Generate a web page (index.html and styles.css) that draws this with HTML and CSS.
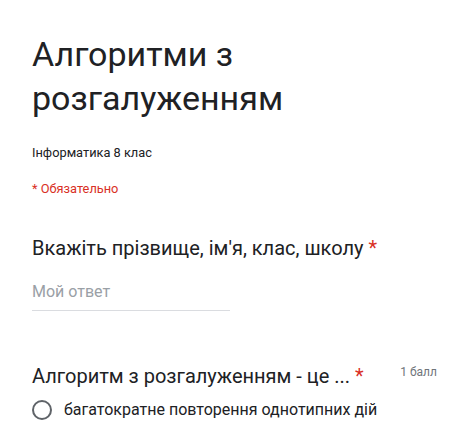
FILE: index.html
```html
<!DOCTYPE html>
<html lang="uk">
<head>
<meta charset="utf-8">
<link rel="stylesheet" href="styles.css">
</head>
<body>
<main class="form">
  <header class="form-header">
    <h1 class="form-title">Алгоритми з розгалуженням</h1>
    <p class="form-desc">Інформатика 8 клас</p>
    <p class="form-required">* Обязательно</p>
  </header>
  <section class="question">
    <div class="q-head">
      <h2 class="q-title">Вкажіть прізвище, ім'я, клас, школу <span class="star">*</span></h2>
    </div>
    <div class="answer">Мой ответ</div>
  </section>
  <section class="question q2">
    <div class="q-head">
      <h2 class="q-title">Алгоритм з розгалуженням - це ... <span class="star">*</span></h2>
      <span class="points">1 балл</span>
    </div>
    <label class="option">
      <span class="radio"></span>
      <span class="opt-text">багатократне повторення однотипних дій</span>
    </label>
  </section>
</main>
</body>
</html>
```
FILE: styles.css
```css
html, body {
  margin: 0;
  padding: 0;
  background: #fff;
}
body {
  font-family: Roboto, "Noto Sans", Arial, sans-serif;
  color: #202124;
}
.form {
  width: 469px;
  padding: 32px 32px 0 32px;
  box-sizing: border-box;
}
.form-title {
  margin: 0;
  font-size: 34px;
  font-weight: 400;
  line-height: 44px;
  width: 300px;
  color: #202124;
}
.form-desc {
  margin: 25px 0 0;
  font-size: 12.8px;
  line-height: 16px;
  color: #202124;
}
.form-required {
  margin: 20px 0 0;
  font-size: 12.8px;
  line-height: 16px;
  color: #d93025;
}
.question {
  margin-top: 39px;
}
.q-head {
  display: flex;
  justify-content: space-between;
  align-items: flex-start;
}
.q-title {
  margin: 0;
  font-size: 20px;
  font-weight: 400;
  line-height: 24px;
  color: #202124;
}
.star {
  color: #d93025;
}
.points {
  font-size: 12px;
  line-height: 16px;
  color: #70757a;
}
.answer {
  margin-top: 21px;
  width: 198px;
  font-size: 16px;
  line-height: 22px;
  color: #9aa0a6;
  border-bottom: 1px solid #dadce0;
  padding-bottom: 7px;
}
.q2 {
  margin-top: 53px;
}
.option {
  display: flex;
  align-items: center;
  gap: 12px;
  margin-top: 10px;
}
.radio {
  width: 16px;
  height: 16px;
  border: 2px solid #5f6368;
  border-radius: 50%;
  flex: none;
}
.opt-text {
  font-size: 16px;
  line-height: 24px;
  color: #202124;
}
```
